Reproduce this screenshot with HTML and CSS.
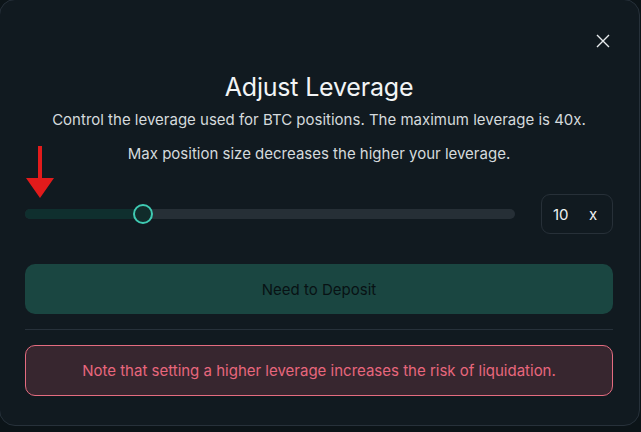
FILE: index.html
```html
<!DOCTYPE html>
<html>
<head>
<meta charset="utf-8">
<link rel="stylesheet" href="styles.css">
</head>
<body>
<div class="modal">
  <div class="close-row">
    <button class="close" aria-label="Close">
      <svg width="14" height="14" viewBox="0 0 14 14"><path d="M1 1L13 13M13 1L1 13" stroke="#e8ecee" stroke-width="1.4" fill="none"/></svg>
    </button>
  </div>
  <h1 class="title">Adjust Leverage</h1>
  <p class="sub">Control the leverage used for BTC positions. The maximum leverage is 40x.</p>
  <p class="sub sub2">Max position size decreases the higher your leverage.</p>
  <div class="slider-row">
    <div class="track">
      <div class="fill" style="width:118px"></div>
      <div class="thumb"></div>
      <svg class="arrow" width="32" height="52" viewBox="0 0 32 52"><path d="M14 0H18V32H30L16 52L2 32H14Z" fill="#e21b1b"/></svg>
    </div>
    <div class="lev-box"><span class="num">10</span><span class="unit">x</span></div>
  </div>
  <button class="deposit">Need to Deposit</button>
  <div class="divider"></div>
  <div class="warn">Note that setting a higher leverage increases the risk of liquidation.</div>
</div>
</body>
</html>
```
FILE: styles.css
```css
html, body {
  margin: 0;
  padding: 0;
  background: #0c1418;
  width: 641px;
  height: 432px;
  overflow: hidden;
  font-family: Inter, "Noto Sans", sans-serif;
}
.modal {
  box-sizing: border-box;
  width: 641px;
  height: 427px;
  margin-top: -1px;
  margin-left: -1px;
  background: #111a20;
  border: 1px solid #27313a;
  border-radius: 16px;
  padding: 34px 26px 0 25px;
  display: flex;
  flex-direction: column;
}
.close-row {
  display: flex;
  justify-content: flex-end;
  height: 14px;
}
.close {
  background: none;
  border: 0;
  padding: 0;
  margin-right: 3px;
  width: 14px;
  height: 14px;
  display: flex;
}
.title {
  margin: 24px 0 0;
  text-align: center;
  font-size: 25px;
  line-height: 30px;
  font-weight: 400;
  color: #f2f4f5;
  letter-spacing: -0.2px;
}
.sub {
  margin: 9px 0 0;
  text-align: center;
  font-size: 15px;
  line-height: 18px;
  color: #d5dadd;
}
.sub2 { margin-top: 16px; }
.slider-row {
  display: flex;
  align-items: center;
  gap: 26px;
  margin-top: 31px;
}
.track {
  position: relative;
  flex: 1;
  height: 10px;
  border-radius: 5px;
  background: #262f36;
}
.fill {
  height: 100%;
  border-radius: 5px 0 0 5px;
  background: #0f2f2e;
}
.thumb {
  position: absolute;
  left: 108px;
  top: -5px;
  width: 16px;
  height: 16px;
  border: 2px solid #3fcab2;
  border-radius: 50%;
  background: #112c2b;
}
.arrow {
  position: absolute;
  left: -1px;
  top: -63px;
}
.lev-box {
  box-sizing: border-box;
  width: 72px;
  height: 40px;
  border: 1px solid #273038;
  border-radius: 9px;
  display: flex;
  align-items: center;
  padding-left: 11px;
  color: #eef1f2;
  font-size: 15px;
}
.num { width: 36px; }
.unit { font-size: 15px; }
.deposit {
  margin-top: 30px;
  height: 50px;
  border: 0;
  border-radius: 10px;
  background: #1a4641;
  color: #081214;
  font-family: inherit;
  font-size: 15px;
}
.divider {
  margin-top: 15px;
  height: 1px;
  background: #27313a;
}
.warn {
  margin-top: 15px;
  box-sizing: border-box;
  height: 51px;
  border: 1px solid #e46c80;
  border-radius: 10px;
  background: #37262f;
  color: #e8677d;
  font-size: 15px;
  display: flex;
  align-items: center;
  justify-content: center;
}
```
